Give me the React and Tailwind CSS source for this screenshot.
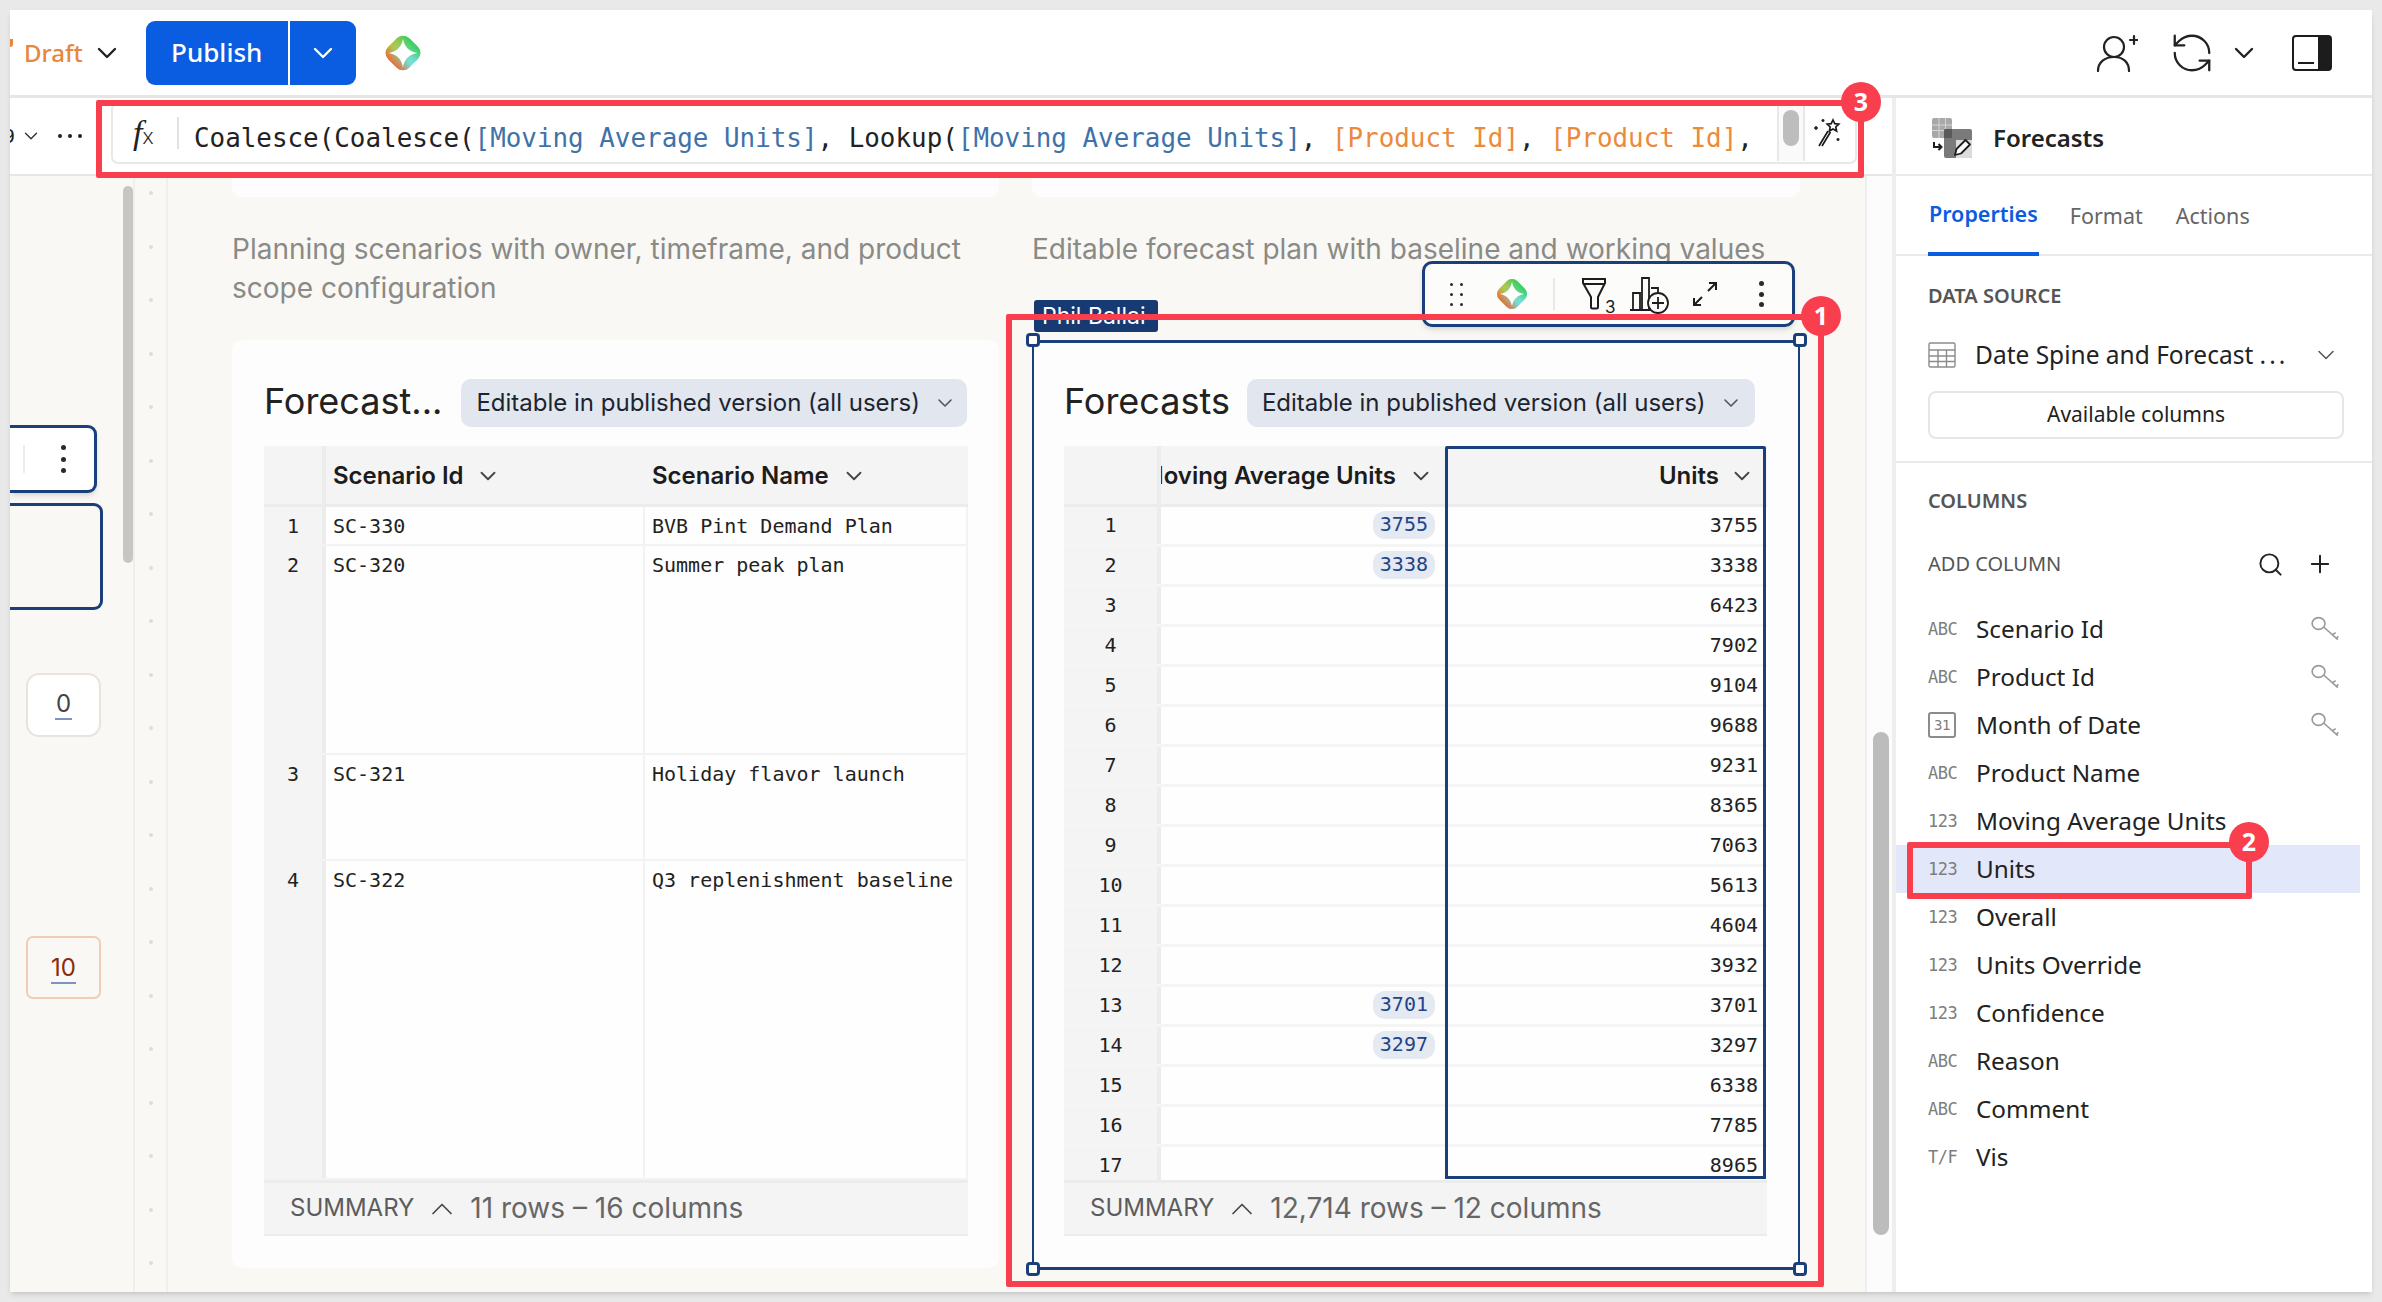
import React from 'react';
import { ChevronDown, ChevronUp, Plus, RefreshCcw, Search } from 'lucide-react';

const scenarioRows = [
  { n: 1, id: 'SC-330', name: 'BVB Pint Demand Plan', h: 'h-[39px]' },
  { n: 2, id: 'SC-320', name: 'Summer peak plan', h: 'h-[209px]' },
  { n: 3, id: 'SC-321', name: 'Holiday flavor launch', h: 'h-[106px]' },
  { n: 4, id: 'SC-322', name: 'Q3 replenishment baseline', h: 'h-[319px]' },
];

const unitRows = [3755, 3338, 6423, 7902, 9104, 9688, 9231, 8365, 7063, 5613, 4604, 3932, 3701, 3297, 6338, 7785, 8965];
const pillRows = [1, 2, 13, 14];

const columns = [
  { type: 'ABC', name: 'Scenario Id', key: true },
  { type: 'ABC', name: 'Product Id', key: true },
  { type: 'cal', name: 'Month of Date', key: true },
  { type: 'ABC', name: 'Product Name' },
  { type: '123', name: 'Moving Average Units' },
  { type: '123', name: 'Units', active: true },
  { type: '123', name: 'Overall' },
  { type: '123', name: 'Units Override' },
  { type: '123', name: 'Confidence' },
  { type: 'ABC', name: 'Reason' },
  { type: 'ABC', name: 'Comment' },
  { type: 'T/F', name: 'Vis' },
];

const rulerDots = Array.from({ length: 21 }, (_, i) => i);

const Gem = ({ className }) => (
  <svg viewBox="0 0 40 40" className={className}>
    <defs>
      <linearGradient id="gemH" x1="0" y1="0.5" x2="1" y2="0.5">
        <stop offset="0" stopColor="#b9c23c" />
        <stop offset="0.5" stopColor="#7fd8a0" />
        <stop offset="1" stopColor="#6fe0e4" />
      </linearGradient>
      <linearGradient id="gemV" x1="0.5" y1="0" x2="0.5" y2="1">
        <stop offset="0" stopColor="#35cf5a" />
        <stop offset="0.45" stopColor="#35cf5a" stopOpacity="0" />
        <stop offset="0.6" stopColor="#ef6a3a" stopOpacity="0" />
        <stop offset="1" stopColor="#ef6a3a" />
      </linearGradient>
    </defs>
    <rect x="6.500" y="6.500" width="27" height="27" rx="8" transform="rotate(45 20 20)" fill="url(#gemH)" />
    <rect x="6.500" y="6.500" width="27" height="27" rx="8" transform="rotate(45 20 20)" fill="url(#gemV)" />
    <path d="M20 7c1.300 7.500 5.500 11.700 13 13-7.500 1.300-11.700 5.500-13 13-1.300-7.500-5.500-11.700-13-13 7.500-1.300 11.700-5.500 13-13z" fill="#fff" />
  </svg>
);

const KeyIcon = () => (
  <svg viewBox="0 0 28 28" className="w-[30px] h-[30px] mt-[4px]" fill="none" stroke="#9a9a9a" strokeWidth="1.5">
    <ellipse cx="8" cy="7" rx="6" ry="5.500" />
    <path d="M13 10.500 26 22M21 17.500l3-2M24.500 21l2-2" />
  </svg>
);

const TableIcon = () => (
  <svg viewBox="0 0 28 28" className="w-[28px] h-[28px]" fill="none" stroke="#8c8c8c" strokeWidth="1.4">
    <rect x="1" y="2" width="26" height="24" rx="1.500" />
    <path d="M1 9h26M1 15h26M1 20.500h26M10 9v17M18.500 9v17" />
  </svg>
);

const SourceIcon = () => (
  <svg viewBox="0 0 40 40" className="w-[40px] h-[40px]">
    <rect x="0" y="0" width="20" height="20" rx="2" fill="#a8a8a8" />
    <path d="M0 7h20M0 12.500h20M7 0v20M13.500 0v20" stroke="#d6d6d6" strokeWidth="1" />
    <rect x="12" y="11" width="28" height="29" rx="2" fill="#7a7a7a" />
    <path d="M12 16V13a2 2 0 0 1 2-2h6v9h-8z" fill="#5a5a5a" />
    <path d="M24 22h16v16a2 2 0 0 1-2 2H24z" fill="#dcdcdc" />
    <path d="M23 37l1.500-6 9-9 4.500 4.500-9 9z" fill="#fff" stroke="#1d1d1d" strokeWidth="1.800" strokeLinejoin="round" />
    <path d="M2 24v5h7M6.500 26l3 3-3 3" fill="none" stroke="#1d1d1d" strokeWidth="2" />
  </svg>
);

const Kebab = ({ className }) => (
  <div className={`flex flex-col items-center justify-between ${className}`}>
    <span className="w-[5px] h-[5px] rounded-full bg-[#2a2a2a]" />
    <span className="w-[5px] h-[5px] rounded-full bg-[#2a2a2a]" />
    <span className="w-[5px] h-[5px] rounded-full bg-[#2a2a2a]" />
  </div>
);

const EditablePill = ({ className }) => (
  <div className={`h-[48px] rounded-[10px] bg-[#e2e6ee] flex items-center pl-[15px] text-[24px] text-[#1c2430] ${className}`}>
    <span className="whitespace-nowrap">Editable in published version (all users)</span>
    <ChevronDown className="w-[24px] h-[24px] ml-[13px] text-[#555]" strokeWidth={1.6} />
  </div>
);

const TableFooter = ({ text }) => (
  <div className="h-[56px] shrink-0 bg-[#f4f4f4] border-t-[3px] border-b-[2px] border-[#ececec] flex items-center pl-[26px] text-[#5c5c5c]">
    <span className="text-[24px] -mt-[2px]">SUMMARY</span>
    <ChevronUp className="w-[36px] h-[36px] ml-[10px] text-[#444]" strokeWidth={1.1} />
    <span className="text-[28px] ml-[10px] text-[#666] -mt-[2px]">{text}</span>
  </div>
);

const Badge = ({ n, className }) => (
  <div className={`absolute w-[40px] h-[40px] rounded-full bg-[#f93f4d] text-white font-bold text-[25px] flex items-center justify-center font-['Noto_Sans',sans-serif] ${className}`}>
    {n}
  </div>
);

const Handle = ({ className }) => (
  <div className={`absolute w-[14px] h-[14px] rounded-[4px] bg-white border-[3px] border-[#1a3f7a] ${className}`} />
);

const LeftRail = () => (
  <div className="w-[125px] shrink-0 flex border-r-[2px] border-[#efefeb]">
    <div className="w-[114px] flex flex-col items-start">
      <div className="mt-[249px] w-[87px] h-[68px] bg-white border-[3px] border-l-0 border-[#1a3f7a] rounded-r-[9px] shadow-md flex items-center">
        <span className="ml-[13px] w-[2px] h-[28px] bg-[#ececec]" />
        <Kebab className="ml-[36px] h-[28px] w-[5px]" />
      </div>
      <div className="mt-[10px] w-[93px] h-[107px] border-[3px] border-l-0 border-[#1a3f7a] rounded-r-[9px]" />
      <div className="mt-[63px] ml-[16px] w-[75px] h-[64px] bg-white border-[2px] border-[#e8e4dc] rounded-[13px] flex items-center justify-center text-[24px] text-[#444]">
        <span className="border-b-[2px] border-[#7d93c4] px-[1px] leading-[28px]">0</span>
      </div>
      <div className="mt-[199px] ml-[16px] w-[75px] h-[63px] border-[2px] border-[#f2cdb5] rounded-[7px] flex items-center justify-center pt-[3px] text-[24px] text-[#8a2c0a]">
        <span className="border-b-[2px] border-[#7d93c4] leading-[28px]">10</span>
      </div>
    </div>
    <div className="w-[10px] mt-[10px] h-[377px] rounded-full bg-[#c6c6c2]" />
  </div>
);

const Ruler = () => (
  <div className="w-[33px] shrink-0 border-r-[2px] border-[#efefeb] flex flex-col items-center pt-[15px] gap-[49.500px]">
    {rulerDots.map((d) => (
      <span key={d} className="w-[4px] h-[4px] rounded-full bg-[#dcdcd8]" />
    ))}
  </div>
);

const ScenarioTable = () => (
  <div className="w-[704px] h-[790px] flex flex-col mt-[19px]">
    <div className="h-[61px] shrink-0 flex bg-[#f4f4f4] border-b-[3px] border-[#ececec] text-[24px] font-semibold text-[#1c1c1c]">
      <div className="w-[62px] border-r-[4px] border-[#ececec]" />
      <div className="w-[318px] pl-[7px] flex items-center pt-[1px]">
        Scenario Id
        <ChevronDown className="w-[26px] h-[26px] ml-[11px] text-[#444]" strokeWidth={1.7} />
      </div>
      <div className="pl-[8px] flex items-center pt-[1px]">
        Scenario Name
        <ChevronDown className="w-[26px] h-[26px] ml-[12px] text-[#444]" strokeWidth={1.7} />
      </div>
    </div>
    <div className="flex-1 overflow-hidden font-['DejaVu_Sans_Mono',monospace] text-[20px] text-[#222]">
      {scenarioRows.map((r) => (
        <div key={r.n} className={`flex ${r.h} border-b-[2px] border-[#f3f3f3]`}>
          <div className="w-[62px] bg-[#f4f4f4] border-r-[4px] border-[#ececec] text-center pt-[4px]">{r.n}</div>
          <div className="w-[317px] pl-[7px] pt-[4px] bg-[#fefefe]">{r.id}</div>
          <div className="flex-1 pl-[7px] pt-[4px] bg-[#fefefe] border-l-[2px] border-[#f3f3f3] border-r-[2px] whitespace-nowrap">{r.name}</div>
        </div>
      ))}
    </div>
    <TableFooter text="11 rows – 16 columns" />
  </div>
);

const UnitsTable = () => (
  <div className="relative w-[703px] h-[790px] flex flex-col mt-[19px]">
    <div className="h-[61px] shrink-0 flex bg-[#f4f4f4] border-b-[3px] border-[#ececec] text-[24px] font-semibold text-[#1c1c1c]">
      <div className="w-[97px] border-r-[4px] border-[#ececec]" />
      <div className="w-[284px] overflow-hidden flex justify-end items-center pr-[11px] pt-[1px]">
        <span className="whitespace-nowrap">Moving Average Units</span>
        <ChevronDown className="w-[26px] h-[26px] ml-[12px] shrink-0 text-[#444]" strokeWidth={1.7} />
      </div>
      <div className="flex-1 flex justify-end items-center pr-[12px] pt-[1px]">
        Units
        <ChevronDown className="w-[26px] h-[26px] ml-[10px] text-[#444]" strokeWidth={1.7} />
      </div>
    </div>
    <div className="flex-1 overflow-hidden font-['DejaVu_Sans_Mono',monospace] text-[20px] text-[#222]">
      {unitRows.map((v, i) => (
        <div key={i} className="flex h-[40px] shrink-0 border-b-[3px] border-[#f5f5f5]">
          <div className="w-[97px] bg-[#f4f4f4] border-r-[4px] border-[#ececec] text-center pt-[3px]">{i + 1}</div>
          <div className="w-[284px] flex justify-end items-start pr-[10px] pt-[4px] bg-[#fefefe]">
            {pillRows.includes(i + 1) && (
              <span className="h-[28px] px-[7px] rounded-[12px] bg-[#e4e9f2] text-[#1f4488] leading-[27px]">{v}</span>
            )}
          </div>
          <div className="flex-1 text-right pr-[9px] pt-[3px] bg-[#fefefe]">{v}</div>
        </div>
      ))}
    </div>
    <TableFooter text="12,714 rows – 12 columns" />
    <div className="absolute left-[381px] top-0 w-[321px] h-[733px] border-[3px] border-[#1a3f7a] rounded-t-[2px]" />
  </div>
);

const Toolbar = () => (
  <div className="absolute left-[1422px] top-[261px] w-[373px] h-[66px] bg-[#fcfcfb] border-[3px] border-[#1a3f7a] rounded-[10px] shadow-md flex items-center">
    <div className="ml-[25px] w-[13px] h-[23px] grid grid-cols-2 justify-between content-between">
      {[0, 1, 2, 3, 4, 5].map((d) => (
        <span key={d} className={`w-[3px] h-[3px] rounded-full bg-[#2a2a2a] ${d % 2 ? 'justify-self-end' : ''}`} />
      ))}
    </div>
    <Gem className="ml-[30px] w-[38px] h-[38px]" />
    <span className="ml-[22px] w-[2px] h-[32px] bg-[#e8e8e8]" />
    <svg viewBox="0 0 36 38" className="ml-[27px] w-[36px] h-[38px] mt-[4px]" fill="none" stroke="#1d1d1d" strokeWidth="2">
      <path d="M1 2h22v4l-7 14v10a1.500 1.500 0 0 1-1.500 1.500h-4A1.500 1.500 0 0 1 9 30V20L1 6zM2 7h20" />
      <text x="23" y="36" fontSize="17" fill="#1d1d1d" stroke="none" fontFamily="Inter, sans-serif">3</text>
    </svg>
    <svg viewBox="0 0 42 38" className="ml-[11px] w-[42px] h-[38px] mt-[2px]" fill="none" stroke="#1d1d1d" strokeWidth="1.800">
      <path d="M1 34h22M4 34V17h7v17M13 34V2h7v32M22 12h7v5" />
      <circle cx="29" cy="27" r="10" fill="#fcfcfb" />
      <path d="M29 21v12M23 27h12" />
    </svg>
    <svg viewBox="0 0 26 26" className="ml-[21px] w-[26px] h-[26px]" fill="none" stroke="#1d1d1d" strokeWidth="2">
      <path d="M16 10l8-8M17 2h7v7M10 16l-8 8M2 17v7h7" />
    </svg>
    <Kebab className="ml-[41px] h-[26px] w-[5px]" />
  </div>
);

const SidePanel = () => (
  <div className="w-[476px] shrink-0 bg-white border-l-[4px] border-[#eeeeee] flex flex-col font-['Noto_Sans',sans-serif] text-[#222] -ml-[4px] box-content">
    <div className="h-[78px] shrink-0 border-b-[2px] border-[#e9e9e9] flex items-center pl-[36px] pt-[4px]">
      <SourceIcon />
      <span className="ml-[21px] text-[24px] font-semibold">Forecasts</span>
    </div>
    <div className="h-[80px] shrink-0 border-b-[2px] border-[#e9e9e9] flex pl-[32px] text-[21.500px] text-[#666]">
      <div className="h-[80px] flex items-center border-b-[4px] border-[#0a5ce0] font-semibold text-[#0a5ce0] px-[1px]">Properties</div>
      <div className="h-[80px] flex items-center ml-[31px]">Format</div>
      <div className="h-[80px] flex items-center ml-[33px]">Actions</div>
    </div>
    <div className="h-[207px] shrink-0 border-b-[2px] border-[#e9e9e9] pl-[32px] pr-[28px] pt-[26px]">
      <div className="text-[20px] font-semibold text-[#555] leading-[28px]">DATA SOURCE</div>
      <div className="flex items-center mt-[25px] h-[40px] whitespace-nowrap">
        <TableIcon />
        <span className="ml-[19px] text-[24.500px]">Date Spine and Forecast <span className="tracking-[3px]">...</span></span>
        <ChevronDown className="w-[28px] h-[28px] ml-[24px] text-[#555]" strokeWidth={1.3} />
      </div>
      <div className="mt-[16px] h-[48px] border-[2px] border-[#e6e6e6] rounded-[8px] flex items-center justify-center text-[21px]">
        Available columns
      </div>
    </div>
    <div className="pl-[32px] pt-[24px] text-[20px] font-semibold text-[#555] leading-[28px]">COLUMNS</div>
    <div className="pl-[32px] pr-[38px] mt-[35px] flex items-center h-[28px] text-[20px] text-[#555]">
      ADD COLUMN
      <Search className="ml-auto w-[27px] h-[27px] text-[#222]" strokeWidth={1.7} />
      <Plus className="ml-[22px] w-[28px] h-[28px] text-[#222]" strokeWidth={1.7} />
    </div>
    <div className="mt-[27px] flex flex-col">
      {columns.map((c) => (
        <div key={c.name} className={`h-[48px] w-[464px] flex items-center pl-[32px] pr-[20px] ${c.active ? 'bg-[#e2e8fa]' : ''}`}>
          <div className="w-[29px] text-[17px] text-[#7d7d7d] font-['DejaVu_Sans_Mono',monospace] tracking-[-0.5px] whitespace-nowrap leading-none">
            {c.type === 'cal' ? (
              <span className="w-[28px] h-[26px] border-[2px] border-[#8c8c8c] rounded-[3px] flex items-center justify-center text-[14px]">31</span>
            ) : (
              c.type
            )}
          </div>
          <span className="ml-[19px] text-[24.300px]">{c.name}</span>
          {c.key && <span className="ml-auto"><KeyIcon /></span>}
        </div>
      ))}
    </div>
  </div>
);

export default function App() {
  return (
    <div className="relative w-[2382px] h-[1302px] bg-[#e9e9e9] p-[10px] overflow-hidden font-['Inter',sans-serif]">
      <div className="w-[2362px] h-[1282px] bg-white flex flex-col shadow-md overflow-hidden">
        {/* top bar */}
        <div className="h-[88px] shrink-0 border-b-[3px] border-[#e6e6e6] flex items-center font-['Noto_Sans',sans-serif]">
          <span className="w-[3px] h-[8px] bg-[#e8873a] rounded-br-[3px] -mt-[20px]" />
          <span className="ml-[11px] text-[24px] font-medium text-[#e8873a]">Draft</span>
          <ChevronDown className="w-[32px] h-[32px] ml-[8px] text-[#222]" strokeWidth={1.8} />
          <div className="ml-[23px] h-[64px] w-[210px] rounded-[9px] bg-[#0a5ce0] flex text-white overflow-hidden">
            <div className="w-[144px] flex items-center justify-center text-[26px] font-medium border-r-[2px] border-white">Publish</div>
            <div className="flex-1 flex items-center justify-center">
              <ChevronDown className="w-[32px] h-[32px]" strokeWidth={1.8} />
            </div>
          </div>
          <Gem className="ml-[25px] w-[44px] h-[44px]" />
          <svg viewBox="0 0 42 38" className="ml-auto w-[42px] h-[38px]" fill="none" stroke="#222" strokeWidth="2.200">
            <circle cx="18" cy="13" r="10" />
            <path d="M2 37c0-9 7-14 16-14s15 5 15 14M34 6h8M38 2v8" strokeLinecap="round" />
          </svg>
          <RefreshCcw className="ml-[31px] w-[46px] h-[46px] text-[#222]" strokeWidth={1.2} />
          <ChevronDown className="ml-[13px] w-[32px] h-[32px] text-[#222]" strokeWidth={1.8} />
          <svg viewBox="0 0 40 36" className="ml-[32px] mr-[40px] w-[40px] h-[36px]" fill="none">
            <rect x="1" y="1" width="38" height="34" rx="3" stroke="#1c1c1c" strokeWidth="2" />
            <path d="M26 1h10a3 3 0 0 1 3 3v28a3 3 0 0 1-3 3H26z" fill="#1c1c1c" />
            <path d="M6 28h16" stroke="#1c1c1c" strokeWidth="2" />
          </svg>
        </div>

        <div className="flex-1 flex min-h-0">
          <div className="w-[1886px] shrink-0 flex flex-col">
            {/* formula bar */}
            <div className="h-[78px] shrink-0 border-b-[2px] border-[#e6e6e6] flex items-center">
              <div className="w-[5px] overflow-hidden flex justify-end font-['DejaVu_Sans_Mono',monospace] text-[20px] text-[#222]">9</div>
              <ChevronDown className="ml-[5px] w-[22px] h-[22px] text-[#333]" strokeWidth={1.5} />
              <div className="ml-[16px] flex gap-[6px]">
                <span className="w-[4px] h-[4px] rounded-full bg-[#222]" />
                <span className="w-[4px] h-[4px] rounded-full bg-[#222]" />
                <span className="w-[4px] h-[4px] rounded-full bg-[#222]" />
              </div>
              <div className="ml-[29px] w-[1746px] h-[62px] -mt-[6px] border-[2px] border-[#e8e8e8] rounded-[7px] flex items-center whitespace-nowrap overflow-hidden">
                <span className="ml-[20px] w-[24px] text-[34px] leading-none text-[#222] font-['Liberation_Serif',serif] italic font-light">f<span className="text-[22px] not-italic font-['Noto_Sans',sans-serif]">x</span></span>
                <span className="ml-[20px] w-[2px] h-[32px] bg-[#e2e2e2]" />
                <div className="ml-[15px] w-[1587px] overflow-hidden pt-[10px] leading-[36px] font-['DejaVu_Sans_Mono',monospace] text-[25.900px] text-[#222]">
                  Coalesce(Coalesce(<span className="text-[#3f72a8]">[Moving Average Units]</span>, Lookup(<span className="text-[#3f72a8]">[Moving Average Units]</span>, <span className="text-[#ec8a3c]">[Product Id]</span>, <span className="text-[#ec8a3c]">[Product Id]</span>,
                </div>
                <div className="w-[28px] h-[56px] border-x-[2px] border-[#e8e8e8] bg-[#fafafa] flex justify-center pt-[5px] -ml-[4px]">
                  <span className="w-[16px] h-[36px] rounded-full bg-[#bdbdbd]" />
                </div>
                <svg viewBox="0 0 28 30" className="ml-[9px] w-[28px] h-[30px]" fill="none" stroke="#1d1d1d" strokeWidth="1.700">
                  <path d="M19 2l1.800 3.700 4 .5-3 2.800.8 4-3.600-2-3.600 2 .8-4-3-2.800 4-.5z" />
                  <path d="M14 13 5 28M16.500 14 8 28" />
                  <path d="M2 8v4M0 10h4M9 1v3M7.500 2.500h3M24 20v3M22.500 21.500h3" strokeWidth="1.500" />
                </svg>
              </div>
            </div>

            {/* canvas */}
            <div className="flex-1 flex min-h-0 bg-[#f9f8f4]">
              <LeftRail />
              <Ruler />
              <div className="w-[1697px] shrink-0 pl-[64px] flex gap-[33px]">
                <div className="w-[767px] flex flex-col">
                  <div className="h-[21px] bg-[#fdfdfd] rounded-b-[10px]" />
                  <p className="mt-[33px] h-[110px] text-[28px] leading-[39px] text-[#8a8a86]">
                    Planning scenarios with owner, timeframe, and product scope configuration
                  </p>
                  <div className="h-[928px] bg-[#fdfdfd] rounded-[10px] px-[32px] pt-[39px]">
                    <div className="flex items-center h-[48px]">
                      <span className="text-[36px] text-[#222] whitespace-nowrap -mt-[5px]">Forecast...</span>
                      <EditablePill className="ml-[19px] w-[507px]" />
                    </div>
                    <ScenarioTable />
                  </div>
                </div>
                <div className="w-[768px] flex flex-col">
                  <div className="h-[21px] bg-[#fdfdfd] rounded-b-[10px]" />
                  <p className="mt-[33px] h-[110px] text-[28px] leading-[39px] text-[#8a8a86] whitespace-nowrap">
                    Editable forecast plan with baseline and working values
                  </p>
                  <div className="h-[930px] bg-[#fdfdfd] border-[2px] border-t-[3px] border-b-[3px] border-[#1a3f7a] px-[30px] pt-[36px]">
                    <div className="flex items-center h-[48px]">
                      <span className="text-[36px] text-[#222] whitespace-nowrap -mt-[5px]">Forecasts</span>
                      <EditablePill className="ml-[17px] w-[508px]" />
                    </div>
                    <UnitsTable />
                  </div>
                </div>
              </div>
              <div className="flex-1 bg-[#fcfcfc] border-l-[2px] border-[#efefef] pl-[6px]">
                <div className="mt-[556px] w-[16px] h-[503px] rounded-full bg-[#bcbcbc]" />
              </div>
            </div>
          </div>
          <SidePanel />
        </div>
      </div>

      {/* selection chrome on the canvas */}
      <div className="absolute left-[1034px] top-[300px] w-[124px] h-[32px] rounded-[3px] bg-[#173a72] text-white text-[23px] leading-[32px] pl-[8px] whitespace-nowrap">Phil Ballai</div>
      <Toolbar />
      <Handle className="left-[1026px] top-[333px]" />
      <Handle className="left-[1793px] top-[333px]" />
      <Handle className="left-[1026px] top-[1262px]" />
      <Handle className="left-[1793px] top-[1262px]" />

      {/* red callouts */}
      <div className="absolute left-[96px] top-[100px] w-[1768px] h-[78px] border-[6px] border-[#f93f4d] rounded-[2px]" />
      <div className="absolute left-[1006px] top-[314px] w-[818px] h-[973px] border-[6px] border-[#f93f4d] rounded-[2px]" />
      <div className="absolute left-[1907px] top-[842px] w-[345px] h-[57px] border-[6px] border-[#f93f4d] rounded-[2px]" />
      <Badge n="3" className="left-[1841px] top-[82px]" />
      <Badge n="1" className="left-[1801px] top-[296px]" />
      <Badge n="2" className="left-[2229px] top-[822px]" />
    </div>
  );
}
